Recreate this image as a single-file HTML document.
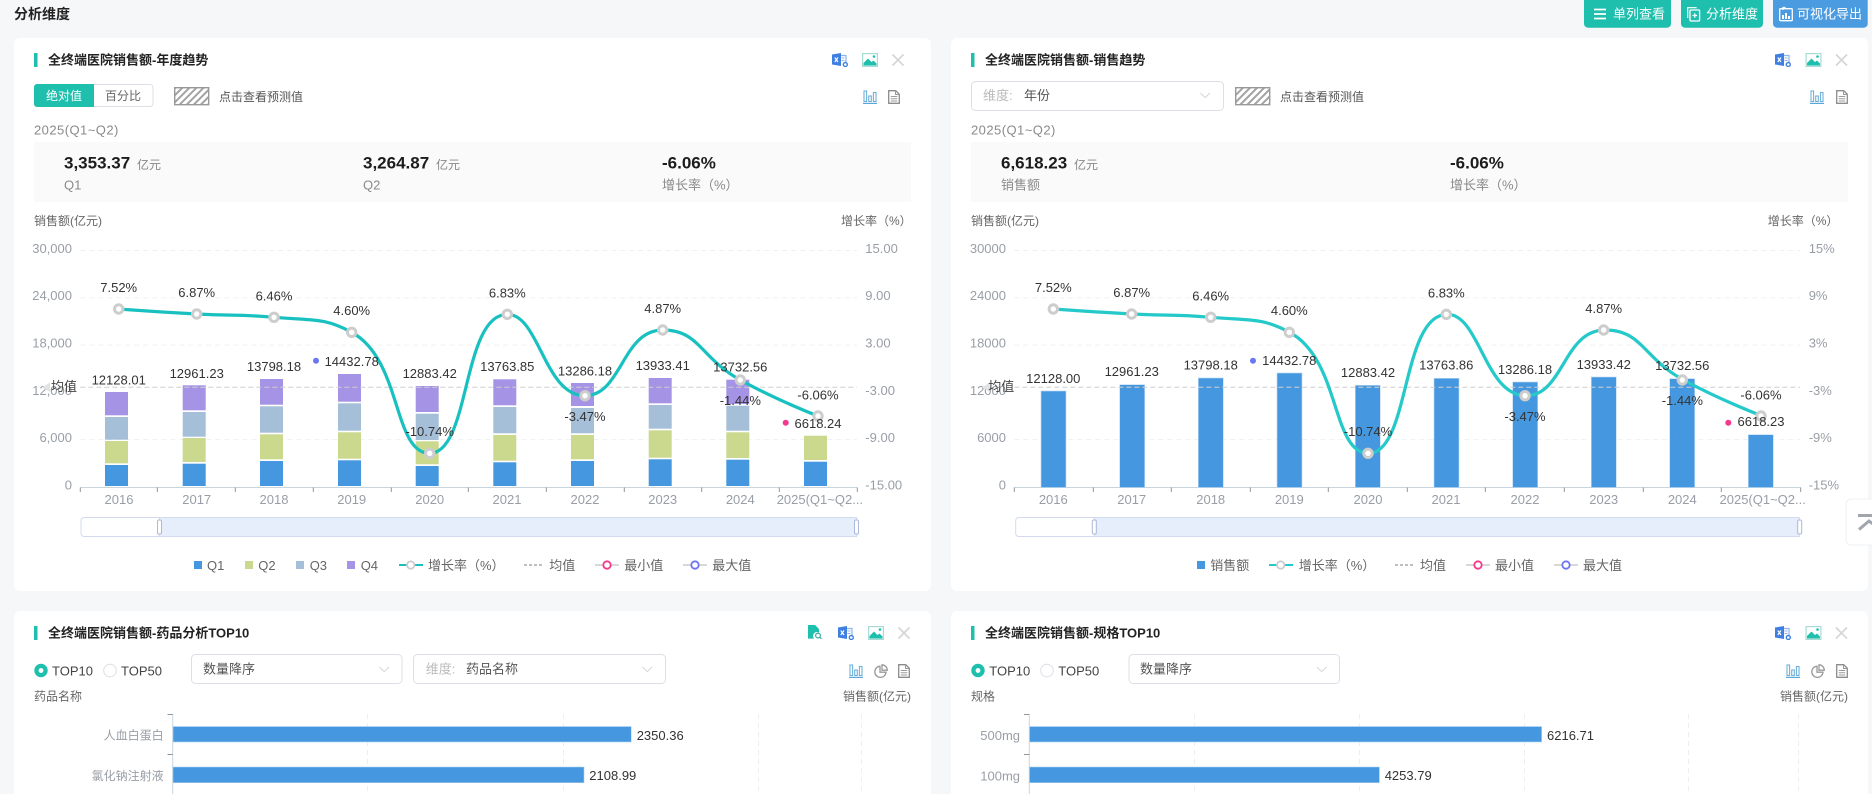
<!DOCTYPE html>
<html lang="zh">
<head>
<meta charset="utf-8">
<title>分析维度</title>
<style>
html,body{margin:0;padding:0;width:1872px;height:794px;overflow:hidden;background:#f6f7f9}
svg{display:block}
text{font-family:"Liberation Sans","Noto Sans CJK SC",sans-serif;font-size:13px;dominant-baseline:central;fill:#333}
.ti{font-size:13px;font-weight:700;fill:#222}
.s12{font-size:12px;fill:#666}
.g{fill:#999ea6}
.l{fill:#666}
.v{font-size:17px;font-weight:700;fill:#1c1c1c}
.u{font-size:12px;fill:#888}
.k{fill:#8a8a8a}
.w{fill:#fff}
.c{fill:#555}
.h{fill:#bbb}
.m{text-anchor:middle}
.e{text-anchor:end}
.y{font-size:13px;letter-spacing:.45px;fill:#8a8a8a}
</style>
</head>
<body>
<svg width="1872" height="794" viewBox="0 0 1872 794" xmlns="http://www.w3.org/2000/svg">
<defs>
<pattern id="hp" width="5" height="5" patternUnits="userSpaceOnUse" patternTransform="rotate(45)">
<rect width="5" height="5" fill="#fff"/><rect width="2" height="5" fill="#a3a3a3"/>
</pattern>
<symbol id="xl" viewBox="0 0 16 14">
<path d="M8 2.5h6v8" fill="none" stroke="#8fb3ec" stroke-width="1.2"/>
<path d="M9.5 5h3M9.5 7.5h3" stroke="#8fb3ec" stroke-width="1"/>
<path d="M0 1.5 9 0v13L0 11.5z" fill="#3f7fe2"/>
<path d="M2.8 4.5 6 9M6 4.5 2.8 9" stroke="#fff" stroke-width="1.2"/>
<circle cx="13.3" cy="11.5" r="2" fill="#fff" stroke="#3f7fe2" stroke-width="1.4"/>
</symbol>
<symbol id="im" viewBox="0 0 16 14">
<rect x=".6" y=".6" width="14.8" height="12.8" fill="#fff" stroke="#a7dcd6" stroke-width="1.2"/>
<path d="M1.5 12.5V10L6 5.5l3.5 3.5 2-1.5 3 3v2z" fill="#1fbfae"/>
<circle cx="12" cy="3.5" r="1.3" fill="#1fbfae"/>
</symbol>
<symbol id="xx" viewBox="0 0 14 14">
<path d="M1.5 1.5l11 11M12.5 1.5l-11 11" stroke="#d6d6d6" stroke-width="1.7" fill="none"/>
</symbol>
<symbol id="bi" viewBox="0 0 14 14">
<path d="M0 13.4h14" stroke="#5aa7d8" stroke-width="1.2"/>
<g fill="none" stroke="#6fb0d8" stroke-width="1.1"><rect x="1" y="1" width="2.6" height="10.5"/><rect x="5.7" y="6" width="2.6" height="5.5"/><rect x="10.4" y="2.5" width="2.6" height="9"/></g>
</symbol>
<symbol id="di" viewBox="0 0 12 14">
<path d="M.7.7h7l3.6 3.6v9H.7z" fill="#fff" stroke="#8c8c8c" stroke-width="1.3"/>
<path d="M7.5.7v3.8h3.8M2.8 6.5h6.4M2.8 8.8h6.4M2.8 11h6.4" fill="none" stroke="#9a9a9a" stroke-width="1"/>
</symbol>
<symbol id="pi" viewBox="0 0 14 14">
<path d="M6 2.2A5.6 5.6 0 1 0 12 8.2H6z" fill="none" stroke="#999" stroke-width="1.3"/>
<path d="M8 .8a5.5 5.5 0 0 1 5.3 5.4H8z" fill="none" stroke="#999" stroke-width="1.3"/>
</symbol>
<symbol id="sd" viewBox="0 0 14 14">
<path d="M0 0h7l4 4v3.5A4 4 0 0 0 6 13.6H0z" fill="#1fbfae"/>
<circle cx="10" cy="10.5" r="2.4" fill="#fff" stroke="#3aa99e" stroke-width="1.2"/>
<path d="M11.8 12.3l1.7 1.5" stroke="#3aa99e" stroke-width="1.2"/>
</symbol>
<g id="ctl"><path id="curve" d="M118.7 309C118.7 309 157.7 311.9 196.7 314C235.3 316.1 235.7 314 274 317.3C313.2 320.7 324 317.3 351.7 332.3C402.1 359.6 392.8 453.3 429.7 453.3C470.5 453.3 461.9 314.3 507.3 314.3C539.4 314.3 544.2 395.7 585 395.7C621.9 395.7 622 330 662.7 330C699.6 330 700 357.7 740.3 380C777.7 400.7 818 416 818 416" fill="none" stroke-width="3.2"/></g>
</defs>

<rect width="1872" height="794" fill="#f6f7f9"/>

<!-- header -->
<text x="14" y="14" style="font-size:14px;font-weight:700;fill:#222">分析维度</text>
<rect x="1584" y="-4" width="87" height="31.7" rx="4" fill="#1fbfae"/>
<path d="M1594 9.5h12M1594 14h12M1594 18.5h12" stroke="#fff" stroke-width="1.8"/>
<text x="1613" y="14" class="w">单列查看</text>
<rect x="1681" y="-4" width="82" height="31.7" rx="4" fill="#1fbfae"/>
<path d="M1687.7 18V7.7h9" fill="none" stroke="#fff" stroke-width="1.2"/>
<rect x="1690" y="10" width="9.6" height="11" rx="1" fill="none" stroke="#fff" stroke-width="1.3"/>
<path d="M1692.5 15.5h4.6M1694.8 13.2v4.6" stroke="#fff" stroke-width="1.2"/>
<text x="1706" y="14" class="w">分析维度</text>
<rect x="1773" y="-4" width="94.7" height="31.7" rx="4" fill="#4a9be0"/>
<rect x="1779.7" y="8.7" width="12.6" height="12" rx="1" fill="none" stroke="#fff" stroke-width="1.3"/>
<path d="M1782 19h2v-4h-2zM1785 19h2v-6h-2zM1788 19h2v-3h-2z" fill="#fff"/>
<path d="M1783 10v-2.5h2.5" stroke="#fff" stroke-width="1.3" fill="none"/>
<text x="1797" y="14" class="w">可视化导出</text>

<!-- cards -->
<rect x="14" y="38" width="917" height="553" rx="6" fill="#fff"/>
<rect x="951" y="38" width="917" height="553" rx="6" fill="#fff"/>
<rect x="14" y="611" width="917" height="210" rx="6" fill="#fff"/>
<rect x="951" y="611" width="917" height="210" rx="6" fill="#fff"/>

<!-- card 1 head -->
<rect x="34" y="53" width="3.5" height="14" fill="#1fbfae"/>
<text x="48" y="60" class="ti">全终端医院销售额-年度趋势</text>
<use href="#xl" x="832" y="53" width="16" height="14"/>
<use href="#im" x="862" y="53" width="16" height="14"/>
<use href="#xx" x="891" y="53" width="14" height="14"/>
<path d="M37 84h57v23H37a3 3 0 0 1-3-3V87a3 3 0 0 1 3-3z" fill="#1fbfae"/>
<path d="M94 84.5h56a3 3 0 0 1 3 3v16a3 3 0 0 1-3 3H94" fill="#fff" stroke="#dcdfe6"/>
<text x="64" y="96" class="s12 m" style="fill:#fff">绝对值</text>
<text x="123" y="96" class="s12 m">百分比</text>
<rect x="174.7" y="87.7" width="34" height="17" fill="url(#hp)" stroke="#999" stroke-width="1.4"/>
<text x="219" y="97" class="s12" style="fill:#555">点击查看预测值</text>
<use href="#bi" x="863" y="90" width="14" height="14"/>
<use href="#di" x="888" y="90" width="12" height="14"/>
<text x="34" y="130" class="y">2025(Q1~Q2)</text>
<rect x="34" y="142" width="877" height="60" fill="#fafafa"/>
<text x="64" y="163" class="v">3,353.37</text><text x="137" y="165" class="u">亿元</text>
<text x="64" y="185" class="k">Q1</text>
<text x="363" y="163" class="v">3,264.87</text><text x="436" y="165" class="u">亿元</text>
<text x="363" y="185" class="k">Q2</text>
<text x="662" y="163" class="v">-6.06%</text>
<text x="662" y="185" class="k">增长率（%）</text>
<text x="34" y="221" class="s12">销售额(亿元)</text>
<text x="841" y="221" class="s12">增长率（%）</text>

<!-- card 1 chart -->
<g stroke="#eff0f3" stroke-dasharray="5 4">
<path d="M80.3 250.5H857M80.3 297.7H857M80.3 345.1H857M80.3 439.6H857"/>
</g>
<path d="M80.3 487.5H857.3" stroke="#c9d5dc" fill="none"/>
<path d="M80.3 487.5v4.5M157.3 487.5v4.5M235.3 487.5v4.5M313.3 487.5v4.5M391.3 487.5v4.5M468.3 487.5v4.5M546.3 487.5v4.5M624.3 487.5v4.5M701.7 487.5v4.5M779.3 487.5v4.5M857.3 487.5v4.5" stroke="#8f969c" fill="none"/>
<g class="g">
<text x="72" y="248.5" class="g e">30,000</text><text x="72" y="295.7" class="g e">24,000</text><text x="72" y="343.2" class="g e">18,000</text><text x="72" y="390.7" class="g e">12,000</text><text x="72" y="437.7" class="g e">6,000</text><text x="72" y="485.2" class="g e">0</text>
<text x="865.3" y="248.5" class="g">15.00</text><text x="865.3" y="295.7" class="g">9.00</text><text x="865.3" y="343.2" class="g">3.00</text><text x="865.3" y="390.7" class="g">-3.00</text><text x="865.3" y="437.7" class="g">-9.00</text><text x="865.3" y="485.2" class="g">-15.00</text>
<text x="119" y="499.5" class="g m">2016</text><text x="196.7" y="499.5" class="g m">2017</text><text x="274" y="499.5" class="g m">2018</text><text x="351.7" y="499.5" class="g m">2019</text><text x="429.7" y="499.5" class="g m">2020</text><text x="507" y="499.5" class="g m">2021</text><text x="585" y="499.5" class="g m">2022</text><text x="662.7" y="499.5" class="g m">2023</text><text x="740.3" y="499.5" class="g m">2024</text><text x="776.7" y="499.5" class="g">2025(Q1~Q2...</text>
</g>
<g fill="#4598df">
<rect x="105" y="465" width="23" height="21"/><rect x="182.7" y="463.7" width="23" height="22.3"/><rect x="260" y="461" width="23" height="25"/><rect x="338" y="460.3" width="23" height="25.7"/><rect x="415.7" y="466" width="23" height="20"/><rect x="493.3" y="462.3" width="23" height="23.7"/><rect x="571" y="461" width="23" height="25"/><rect x="648.7" y="459.3" width="23" height="26.7"/><rect x="726.3" y="459.7" width="23" height="26.3"/><rect x="804" y="461.7" width="23" height="24.3"/>
</g>
<g fill="#cbd98f">
<rect x="105" y="441" width="23" height="22.3"/><rect x="182.7" y="438" width="23" height="24"/><rect x="260" y="434.3" width="23" height="25"/><rect x="338" y="432.3" width="23" height="26.4"/><rect x="415.7" y="441.3" width="23" height="23"/><rect x="493.3" y="435" width="23" height="25.7"/><rect x="571" y="435" width="23" height="24.3"/><rect x="648.7" y="430.3" width="23" height="27.4"/><rect x="726.3" y="432.3" width="23" height="25.7"/><rect x="804" y="435.7" width="23" height="24.3"/>
</g>
<g fill="#a5bfd9">
<rect x="105" y="417" width="23" height="22.7"/><rect x="182.7" y="412" width="23" height="24.7"/><rect x="260" y="406.3" width="23" height="26.4"/><rect x="338" y="403.3" width="23" height="27.4"/><rect x="415.7" y="413.7" width="23" height="26.3"/><rect x="493.3" y="407" width="23" height="26.3"/><rect x="571" y="408" width="23" height="25.3"/><rect x="648.7" y="405" width="23" height="23.7"/><rect x="726.3" y="405.7" width="23" height="25"/>
</g>
<g fill="#a594e5">
<rect x="105" y="392" width="23" height="23.3"/><rect x="182.7" y="385.3" width="23" height="25"/><rect x="260" y="379" width="23" height="25.7"/><rect x="338" y="374" width="23" height="27.7"/><rect x="415.7" y="386" width="23" height="26"/><rect x="493.3" y="379.3" width="23" height="26"/><rect x="571" y="383" width="23" height="23"/><rect x="648.7" y="378" width="23" height="25.3"/><rect x="726.3" y="379.7" width="23" height="24.3"/>
</g>
<path d="M80.3 387.3H857" stroke="#cfcfcf" stroke-dasharray="5 3" fill="none"/>
<path d="M50 382.5v9.5l-8-4.7z" fill="#e3e3e3"/>
<text x="64" y="386.7" class="m" style="fill:#444">均值</text>
<use href="#curve" stroke="#19c0c0"/>
<g fill="#fff" stroke="#cdcdcd" stroke-width="3">
<circle cx="118.7" cy="309" r="4.2"/><circle cx="196.7" cy="314" r="4.2"/><circle cx="274" cy="317.3" r="4.2"/><circle cx="351.7" cy="332.3" r="4.2"/><circle cx="429.7" cy="453.3" r="4.2"/><circle cx="507.3" cy="314.3" r="4.2"/><circle cx="585" cy="395.7" r="4.2"/><circle cx="662.7" cy="330" r="4.2"/><circle cx="740.3" cy="380" r="4.2"/><circle cx="818" cy="416" r="4.2"/>
</g>
<circle cx="316" cy="360.7" r="3" fill="#6b76ef"/>
<circle cx="785.7" cy="422.7" r="3" fill="#f4388b"/>
<text x="118.7" y="287.7" class="m">7.52%</text><text x="196.7" y="292.7" class="m">6.87%</text><text x="274" y="296" class="m">6.46%</text><text x="351.7" y="310.7" class="m">4.60%</text><text x="429.7" y="431.7" class="m">-10.74%</text><text x="507.3" y="293" class="m">6.83%</text><text x="585" y="416.7" class="m">-3.47%</text><text x="662.7" y="308.7" class="m">4.87%</text><text x="740.3" y="400.3" class="m">-1.44%</text><text x="818" y="395" class="m">-6.06%</text>
<text x="118.7" y="380" class="m">12128.01</text><text x="196.7" y="373.3" class="m">12961.23</text><text x="274" y="366.7" class="m">13798.18</text><text x="351.7" y="361.7" class="m">14432.78</text><text x="429.7" y="373.7" class="m">12883.42</text><text x="507.3" y="366.7" class="m">13763.85</text><text x="585" y="371" class="m">13286.18</text><text x="662.7" y="365.7" class="m">13933.41</text><text x="740.3" y="367" class="m">13732.56</text><text x="818" y="423.3" class="m">6618.24</text>
<!-- datazoom 1 -->
<rect x="81" y="517.5" width="775.7" height="19" rx="3" fill="#fff" stroke="#d2dbee"/>
<rect x="159.3" y="517.5" width="697.4" height="19" fill="#e6edfb" stroke="#d2dbee"/>
<rect x="157.5" y="520" width="4" height="14" rx="1.5" fill="#fff" stroke="#aab8da"/>
<rect x="854.5" y="520" width="4" height="14" rx="1.5" fill="#fff" stroke="#aab8da"/>
<!-- legend 1 -->
<rect x="194" y="561" width="8" height="8" fill="#4598df"/><text x="207" y="565.5" class="l">Q1</text>
<rect x="245" y="561" width="8" height="8" fill="#cbd98f"/><text x="258.3" y="565.5" class="l">Q2</text>
<rect x="296" y="561" width="8" height="8" fill="#a5bfd9"/><text x="309.7" y="565.5" class="l">Q3</text>
<rect x="347" y="561" width="8" height="8" fill="#a594e5"/><text x="360.7" y="565.5" class="l">Q4</text>
<path d="M399 565h24" stroke="#19c0c0" stroke-width="2"/><circle cx="410.7" cy="565" r="3.7" fill="#fff" stroke="#ccc" stroke-width="1.8"/><text x="428" y="565.5" class="l">增长率（%）</text>
<path d="M524 565h20" stroke="#999" stroke-width="1.2" stroke-dasharray="3 2"/><text x="549.3" y="565.5" class="l">均值</text>
<path d="M595 565h24" stroke="#ccc" stroke-width="1.5"/><circle cx="607" cy="565" r="3.7" fill="#fff" stroke="#f4388b" stroke-width="1.8"/><text x="624.3" y="565.5" class="l">最小值</text>
<path d="M683 565h24" stroke="#ccc" stroke-width="1.5"/><circle cx="695" cy="565" r="3.7" fill="#fff" stroke="#6b76ef" stroke-width="1.8"/><text x="712.3" y="565.5" class="l">最大值</text>

<!-- card 2 head -->
<rect x="971" y="53" width="3.5" height="14" fill="#1fbfae"/>
<text x="985" y="60" class="ti">全终端医院销售额-销售趋势</text>
<use href="#xl" x="1775" y="53" width="16" height="14"/>
<use href="#im" x="1805.5" y="53" width="16" height="14"/>
<use href="#xx" x="1834.5" y="53" width="14" height="14"/>
<rect x="971.5" y="81.5" width="252" height="29" rx="4" fill="#fff" stroke="#dcdfe6"/>
<text x="983" y="95.5" class="h">维度:</text>
<text x="1024" y="95.5" class="c">年份</text>
<path d="M1200.5 93l4.7 4.7 4.7-4.7" fill="none" stroke="#d3d6dc"/>
<rect x="1235.7" y="87.7" width="34" height="17" fill="url(#hp)" stroke="#999" stroke-width="1.4"/>
<text x="1280" y="97" class="s12" style="fill:#555">点击查看预测值</text>
<use href="#bi" x="1810" y="90" width="14" height="14"/>
<use href="#di" x="1836" y="90" width="12" height="14"/>
<text x="971" y="130" class="y">2025(Q1~Q2)</text>
<rect x="971" y="142" width="877" height="60" fill="#fafafa"/>
<text x="1001" y="163" class="v">6,618.23</text><text x="1074" y="165" class="u">亿元</text>
<text x="1001" y="185" class="k">销售额</text>
<text x="1450" y="163" class="v">-6.06%</text>
<text x="1450" y="185" class="k">增长率（%）</text>
<text x="971" y="221" class="s12">销售额(亿元)</text>
<text x="1767.7" y="221" class="s12">增长率（%）</text>

<!-- card 2 chart -->
<g stroke="#eff0f3" stroke-dasharray="5 4">
<path d="M1014.3 250.5H1800M1014.3 297.7H1800M1014.3 345.1H1800M1014.3 439.6H1800"/>
</g>
<path d="M1014.3 487.5H1800.7" stroke="#c9d5dc" fill="none"/>
<path d="M1014.3 487.5v4.5M1093.3 487.5v4.5M1171.3 487.5v4.5M1250.3 487.5v4.5M1328.3 487.5v4.5M1407.3 487.5v4.5M1485.3 487.5v4.5M1564.3 487.5v4.5M1643.3 487.5v4.5M1721.3 487.5v4.5M1800.7 487.5v4.5" stroke="#8f969c" fill="none"/>
<text x="1006" y="248.5" class="g e">30000</text><text x="1006" y="295.7" class="g e">24000</text><text x="1006" y="343.2" class="g e">18000</text><text x="1006" y="390.7" class="g e">12000</text><text x="1006" y="437.7" class="g e">6000</text><text x="1006" y="485.2" class="g e">0</text>
<text x="1808.7" y="248.5" class="g">15%</text><text x="1808.7" y="295.7" class="g">9%</text><text x="1808.7" y="343.2" class="g">3%</text><text x="1808.7" y="390.7" class="g">-3%</text><text x="1808.7" y="437.7" class="g">-9%</text><text x="1808.7" y="485.2" class="g">-15%</text>
<text x="1053.3" y="499.5" class="g m">2016</text><text x="1131.7" y="499.5" class="g m">2017</text><text x="1210.7" y="499.5" class="g m">2018</text><text x="1289.3" y="499.5" class="g m">2019</text><text x="1368" y="499.5" class="g m">2020</text><text x="1446" y="499.5" class="g m">2021</text><text x="1525" y="499.5" class="g m">2022</text><text x="1603.7" y="499.5" class="g m">2023</text><text x="1682.3" y="499.5" class="g m">2024</text><text x="1719.5" y="499.5" class="g">2025(Q1~Q2...</text>
<g fill="#4598df" stroke="#bcd8f3" stroke-width=".6">
<rect x="1041" y="391" width="25" height="96.5"/><rect x="1119.7" y="384.7" width="25" height="102.8"/><rect x="1198.3" y="378" width="25" height="109.5"/><rect x="1277" y="373" width="25" height="114.5"/><rect x="1355.3" y="385.3" width="25" height="102.2"/><rect x="1434" y="378.3" width="25" height="109.2"/><rect x="1512.7" y="382" width="25" height="105.5"/><rect x="1591.3" y="377" width="25" height="110.5"/><rect x="1669.7" y="378.7" width="25" height="108.8"/><rect x="1748.3" y="434.7" width="25" height="52.8"/>
</g>
<path d="M1014.3 387.3H1800" stroke="#cfcfcf" stroke-dasharray="5 3" fill="none"/>
<path d="M990 382.5v9.5l-8-4.7z" fill="#e3e3e3"/>
<text x="1001.3" y="386.7" class="m" style="fill:#444">均值</text>
<g transform="translate(932.95 0) scale(1.0139 1)"><use href="#curve" stroke="#25c9c9"/></g>
<g fill="#fff" stroke="#cdcdcd" stroke-width="3">
<circle cx="1053.3" cy="309" r="4.2"/><circle cx="1131.7" cy="314" r="4.2"/><circle cx="1210.7" cy="317.3" r="4.2"/><circle cx="1289.3" cy="332.3" r="4.2"/><circle cx="1368" cy="453.3" r="4.2"/><circle cx="1446.3" cy="314.3" r="4.2"/><circle cx="1525" cy="395.7" r="4.2"/><circle cx="1603.7" cy="330" r="4.2"/><circle cx="1682.3" cy="380" r="4.2"/><circle cx="1761" cy="416" r="4.2"/>
</g>
<circle cx="1253" cy="360.7" r="3" fill="#6b76ef"/>
<circle cx="1728.3" cy="422.7" r="3" fill="#f4388b"/>
<text x="1053.3" y="287.7" class="m">7.52%</text><text x="1131.7" y="292.7" class="m">6.87%</text><text x="1210.7" y="296" class="m">6.46%</text><text x="1289.3" y="310.7" class="m">4.60%</text><text x="1368" y="431.7" class="m">-10.74%</text><text x="1446.3" y="293" class="m">6.83%</text><text x="1525" y="416.7" class="m">-3.47%</text><text x="1603.7" y="308.7" class="m">4.87%</text><text x="1682.3" y="400.3" class="m">-1.44%</text><text x="1761" y="395" class="m">-6.06%</text>
<text x="1053.3" y="378.3" class="m">12128.00</text><text x="1131.7" y="371.7" class="m">12961.23</text><text x="1210.7" y="365" class="m">13798.18</text><text x="1289.3" y="360.3" class="m">14432.78</text><text x="1368" y="372.3" class="m">12883.42</text><text x="1446.3" y="365" class="m">13763.86</text><text x="1525" y="369.3" class="m">13286.18</text><text x="1603.7" y="364.3" class="m">13933.42</text><text x="1682.3" y="365.7" class="m">13732.56</text><text x="1761" y="421.7" class="m">6618.23</text>
<!-- datazoom 2 -->
<rect x="1015.7" y="517.5" width="783.6" height="19" rx="3" fill="#fff" stroke="#d2dbee"/>
<rect x="1094.3" y="517.5" width="705" height="19" fill="#e6edfb" stroke="#d2dbee"/>
<rect x="1092.3" y="520" width="4" height="14" rx="1.5" fill="#fff" stroke="#aab8da"/>
<rect x="1797.7" y="520" width="4" height="14" rx="1.5" fill="#fff" stroke="#aab8da"/>
<!-- legend 2 -->
<rect x="1197" y="561" width="8" height="8" fill="#4598df"/><text x="1210.3" y="565.5" class="l">销售额</text>
<path d="M1269 565h24" stroke="#25c9c9" stroke-width="2"/><circle cx="1280.7" cy="565" r="3.7" fill="#fff" stroke="#ccc" stroke-width="1.8"/><text x="1298.7" y="565.5" class="l">增长率（%）</text>
<path d="M1395 565h20" stroke="#999" stroke-width="1.2" stroke-dasharray="3 2"/><text x="1420" y="565.5" class="l">均值</text>
<path d="M1466 565h24" stroke="#ccc" stroke-width="1.5"/><circle cx="1478" cy="565" r="3.7" fill="#fff" stroke="#f4388b" stroke-width="1.8"/><text x="1495" y="565.5" class="l">最小值</text>
<path d="M1554 565h24" stroke="#ccc" stroke-width="1.5"/><circle cx="1566" cy="565" r="3.7" fill="#fff" stroke="#6b76ef" stroke-width="1.8"/><text x="1583" y="565.5" class="l">最大值</text>

<!-- back to top -->
<path d="M1880 499H1851a5 5 0 0 0-5 5v36a5 5 0 0 0 5 5h29z" fill="#fff" stroke="#eef0f3"/>
<path d="M1858 515.5H1872" stroke="#a0a5ae" stroke-width="3"/>
<path d="M1859 529.5l10-8.5 4 3" fill="none" stroke="#a0a5ae" stroke-width="3"/>

<!-- card 3 -->
<rect x="34" y="626" width="3.5" height="14" fill="#1fbfae"/>
<text x="48" y="633" class="ti">全终端医院销售额-药品分析TOP10</text>
<use href="#sd" x="808" y="625" width="14" height="14"/>
<use href="#xl" x="838" y="626" width="16" height="14"/>
<use href="#im" x="868" y="626" width="16" height="14"/>
<use href="#xx" x="897" y="626" width="14" height="14"/>
<circle cx="41" cy="670.5" r="6.7" fill="#1fbfae"/><circle cx="41" cy="670.5" r="2.4" fill="#fff"/>
<text x="52" y="671" style="fill:#444">TOP10</text>
<circle cx="110" cy="670.5" r="6.3" fill="#fff" stroke="#dcdfe6"/>
<text x="121" y="671" style="fill:#444">TOP50</text>
<rect x="191.5" y="654.5" width="210.5" height="29" rx="4" fill="#fff" stroke="#dcdfe6"/>
<text x="203" y="669" class="c">数量降序</text>
<path d="M379.5 667l4.7 4.7 4.7-4.7" fill="none" stroke="#d3d6dc"/>
<rect x="413.5" y="654.5" width="252" height="29" rx="4" fill="#fff" stroke="#dcdfe6"/>
<text x="425.7" y="669" class="h">维度:</text><text x="466" y="669" class="c">药品名称</text>
<path d="M642.5 667l4.7 4.7 4.7-4.7" fill="none" stroke="#d3d6dc"/>
<use href="#bi" x="849" y="664" width="14" height="14"/>
<use href="#pi" x="874" y="664" width="14" height="14"/>
<use href="#di" x="898" y="664" width="12" height="14"/>
<text x="34" y="696.7" class="s12">药品名称</text>
<text x="843" y="696.7" class="s12">销售额(亿元)</text>
<path d="M367.5 714V794M563.5 714V794M758.5 714V794M861.5 714V794" stroke="#eceef1" stroke-dasharray="5 4"/>
<path d="M172.7 714V794" stroke="#c9d5dc" fill="none"/>
<path d="M167.5 714.5H172.7M167.5 754.5H172.7" stroke="#8f969c" fill="none"/>
<rect x="173" y="726.5" width="458.3" height="15.5" fill="#4598df" stroke="#bcd8f3" stroke-width=".6"/>
<rect x="173" y="767" width="411" height="15.7" fill="#4598df" stroke="#a8cdee" stroke-width=".6"/>
<text x="636.7" y="735.3">2350.36</text>
<text x="589.3" y="775.3">2108.99</text>
<text x="163.7" y="735.5" class="e g" style="font-size:12px">人血白蛋白</text>
<text x="163.7" y="776" class="e g" style="font-size:12px">氯化钠注射液</text>

<!-- card 4 -->
<rect x="971" y="626" width="3.5" height="14" fill="#1fbfae"/>
<text x="985" y="633" class="ti">全终端医院销售额-规格TOP10</text>
<use href="#xl" x="1775" y="626" width="16" height="14"/>
<use href="#im" x="1805.5" y="626" width="16" height="14"/>
<use href="#xx" x="1834.5" y="626" width="14" height="14"/>
<circle cx="978" cy="670.5" r="6.7" fill="#1fbfae"/><circle cx="978" cy="670.5" r="2.4" fill="#fff"/>
<text x="989.3" y="671" style="fill:#444">TOP10</text>
<circle cx="1047" cy="670.5" r="6.3" fill="#fff" stroke="#dcdfe6"/>
<text x="1058.3" y="671" style="fill:#444">TOP50</text>
<rect x="1129" y="654.5" width="210.5" height="29" rx="4" fill="#fff" stroke="#dcdfe6"/>
<text x="1140" y="669" class="c">数量降序</text>
<path d="M1317 667l4.7 4.7 4.7-4.7" fill="none" stroke="#d3d6dc"/>
<use href="#bi" x="1786" y="664" width="14" height="14"/>
<use href="#pi" x="1811" y="664" width="14" height="14"/>
<use href="#di" x="1836" y="664" width="12" height="14"/>
<text x="971" y="696.7" class="s12">规格</text>
<text x="1780" y="696.7" class="s12">销售额(亿元)</text>
<path d="M1194.5 714V794M1359.5 714V794M1524.5 714V794M1688.5 714V794M1798.5 714V794" stroke="#eceef1" stroke-dasharray="5 4"/>
<path d="M1029.3 714V794" stroke="#c9d5dc" fill="none"/>
<path d="M1024 714.5H1029.3M1024 754.5H1029.3" stroke="#8f969c" fill="none"/>
<rect x="1029.5" y="726.5" width="512.2" height="15.5" fill="#4598df" stroke="#bcd8f3" stroke-width=".6"/>
<rect x="1029.5" y="767" width="349.9" height="15.7" fill="#4598df" stroke="#a8cdee" stroke-width=".6"/>
<text x="1547" y="735.3">6216.71</text>
<text x="1384.7" y="775.3">4253.79</text>
<text x="1020" y="735.5" class="e g">500mg</text>
<text x="1020" y="776" class="e g">100mg</text>
</svg>
</body>
</html>
